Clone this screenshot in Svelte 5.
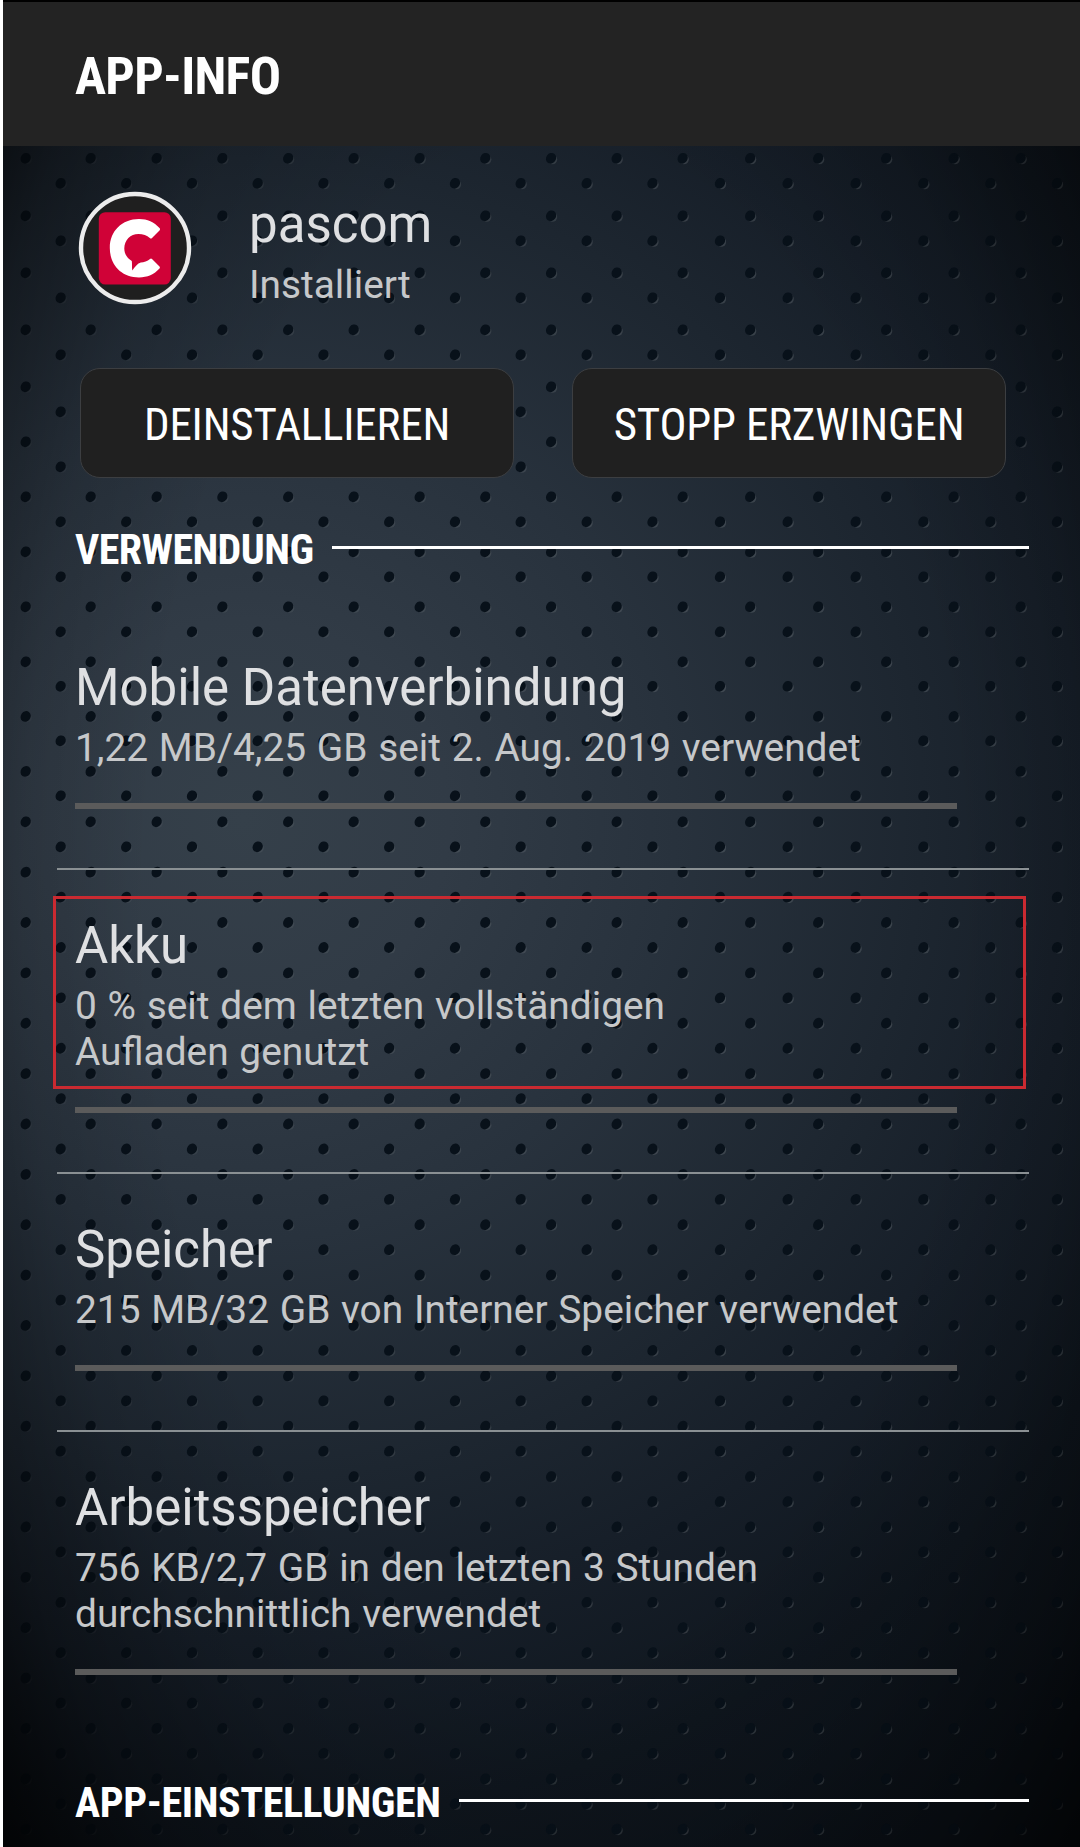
<script>
  const stats = [
    { title: 'Mobile Datenverbindung', lines: ['1,22 MB/4,25 GB seit 2. Aug. 2019 verwendet'] },
    { title: 'Akku', lines: ['0 % seit dem letzten vollständigen', 'Aufladen genutzt'], marked: true },
    { title: 'Speicher', lines: ['215 MB/32 GB von Interner Speicher verwendet'] },
    { title: 'Arbeitsspeicher', lines: ['756 KB/2,7 GB in den letzten 3 Stunden', 'durchschnittlich verwendet'] }
  ];

  // Perforated wallpaper: two interleaved grids of holes
  const colsA = [26, 91, 157, 222.7, 288.5, 354, 420, 485.6, 551.4, 617, 683, 750.5, 818.5, 886.5, 954, 1021];
  const colsB = [61, 126.5, 192.3, 258, 323.8, 389.5, 455.3, 521, 587, 652.8, 720.3, 788, 856, 923.7, 990.7, 1057.3];
  const tail = (start, n) => Array.from({ length: n }, (_, i) => start + i * 50.37);
  const rowsA = [158.5, 216, 273, 330, 387, 442, 497, 552, 607, 662, 716.7, 771.6, ...tail(822, 21)];
  const rowsB = [183.5, 241, 298, 355, 412, 467, 522, 577, 632, 686.5, 741, 796, ...tail(847, 20)];
  const holes = [
    ...rowsA.flatMap((y) => colsA.map((x) => [x, y])),
    ...rowsB.flatMap((y) => colsB.map((x) => [x, y]))
  ];

  // The lit rim of a hole gets stronger towards the right-hand side
  const rimOpacity = (x) => 0.07 + 0.2 * Math.min(1, x / 700);
</script>

<main class="screen">
  <svg class="wallpaper" width="1080" height="1847" viewBox="0 0 1080 1847" aria-hidden="true">
    {#each holes as [x, y]}
      <circle class="rim" cx={x + 1} cy={y + 1} r="4.8" opacity={rimOpacity(x)} />
      <ellipse class="hole" cx={x - 0.4} cy={y} rx="4.9" ry="5.6" transform="rotate(35 {x} {y})" />
    {/each}
  </svg>
  <div class="vignette"></div>

  <header class="bar"><h1 class="cond">APP-INFO</h1></header>

  <div class="content">
    <section class="app">
      <svg class="logo" width="114" height="114" viewBox="0 0 114 114" aria-hidden="true">
        <circle cx="57" cy="57" r="54" fill="#1f1f1f" stroke="#ececec" stroke-width="4.4" />
        <rect x="20.8" y="21.2" width="72" height="72.4" rx="6.5" fill="#d00237" />
        <path
          d="M81.5 37 C76 31 69.500 28 61 28 C44 28 31.800 40 31.800 57 C31.800 74 43.500 86.400 61 86.400 C69.500 86.400 76 83.500 81.500 77.500 Q82.300 76.500 81.500 75.500 L74 68 Q73 67 72 68 C69.500 70.500 65.800 71.300 62.800 71.600 C59.500 72.500 57 76 54.300 79.500 C53.800 76.500 54.200 73 53.800 70 C49.200 67.400 46.300 62.800 46.300 57.500 C46.300 49 52.500 43 60.500 43 C65 43 69 44.500 71.800 47 Q73 48 74 47 L81.500 39.500 Q82.500 38.200 81.500 37 Z"
          fill="#fff"
        />
      </svg>
      <div class="app-text">
        <div class="name">pascom</div>
        <div class="sub">Installiert</div>
      </div>
    </section>

    <div class="actions">
      <button><span class="cond">DEINSTALLIEREN</span></button>
      <button><span class="cond">STOPP ERZWINGEN</span></button>
    </div>

    <h2 class="section usage"><span class="cond">VERWENDUNG</span><i class="rule"></i></h2>

    <div class="stats">
      {#each stats as s}
        <article class="stat">
          {#if s.marked}<div class="mark"></div>{/if}
          <div class="name">{s.title}</div>
          {#each s.lines as line}<div class="sub">{line}</div>{/each}
          <div class="meter"></div>
        </article>
      {/each}
    </div>

    <h2 class="section settings"><span class="cond">APP-EINSTELLUNGEN</span><i class="rule"></i></h2>
  </div>
</main>

<style>
  :global(body) { margin: 0; background: #000; }
  .screen {
    position: relative;
    box-sizing: border-box;
    width: 1080px;
    height: 1847px;
    overflow: hidden;
    border-left: 3px solid #fff;
    font-family: Roboto, "Liberation Sans", sans-serif;
    background: radial-gradient(ellipse 1030px 1000px at 240px 820px, #35404a 0, #313b46 20%, #28323d 42%, #1d2630 66%, #161e28 82%, #0f161e 100%, #0b1118 120%);
  }
  .wallpaper { position: absolute; left: -3px; top: 0; }
  .vignette {
    position: absolute;
    inset: 0;
    background: radial-gradient(ellipse 780px 1440px at 550px 900px, rgba(0, 0, 0, 0) 52%, rgba(0, 0, 0, .13) 68%, rgba(0, 0, 0, .38) 82%, rgba(0, 0, 0, .8) 96%, #000 104%);
  }
  .rim { fill: #8a8f92; }
  .hole { fill: #08111a; }
  .bar {
    position: relative;
    box-sizing: border-box;
    height: 146px;
    padding: 45px 0 0 72px;
    background: #232323;
    border-top: 2px solid #000;
  }
  h1, h2 { margin: 0; color: #fff; font-weight: 700; }
  .cond {
    display: inline-block;
    font-family: "Roboto Condensed", Roboto, sans-serif;
    font-stretch: condensed;
    white-space: nowrap;
  }
  h1 { font-size: 52px; line-height: 60px; letter-spacing: -.7px; }
  .content { position: relative; }
  .app { display: flex; gap: 57px; padding: 44px 0 0 75px; height: 178px; }
  .logo { margin-top: .5px; }
  .app-text { padding-top: 5px; }
  .name { color: #dfe0e2; font-size: 51px; line-height: 60px; white-space: nowrap; }
  .sub { color: #c6c8ca; font-size: 38.85px; line-height: 46px; word-spacing: 1.1px; white-space: nowrap; }
  .name + .sub { margin-top: 7px; }
  .actions { display: flex; gap: 58px; padding-left: 77px; }
  button {
    box-sizing: border-box;
    width: 434px;
    height: 110px;
    padding: 2px 0 0;
    color: #fff;
    font-size: 45px;
    letter-spacing: -.18px;
    background: #202020;
    border: 1px solid #3c3e41;
    border-radius: 20px;
  }
  .section { display: flex; align-items: center; gap: 19px; padding: 0 51px 0 72px; font-size: 42px; line-height: 50px; }
  .usage { margin-top: 47px; letter-spacing: -.55px; }
  .rule { flex: 1; height: 3px; margin-top: -5px; background: #fff; }
  .stats { margin-top: 37px; }
  .stat { position: relative; margin: 0 51px 0 54px; padding: 46px 0 59px 18px; border-bottom: 2px solid #8a9093; }
  .stat:last-child { border-bottom: 0; }
  .stat .name, .stat .sub { position: relative; }
  .meter { width: 882px; height: 6px; margin: 32px 0 0; background: #5b5b5b; }
  .mark { position: absolute; left: -4px; top: 26px; width: 967px; height: 187px; border: 3px solid #ca2a31; }
  .settings { gap: 18px; margin-top: 44px; letter-spacing: -.38px; }
</style>
